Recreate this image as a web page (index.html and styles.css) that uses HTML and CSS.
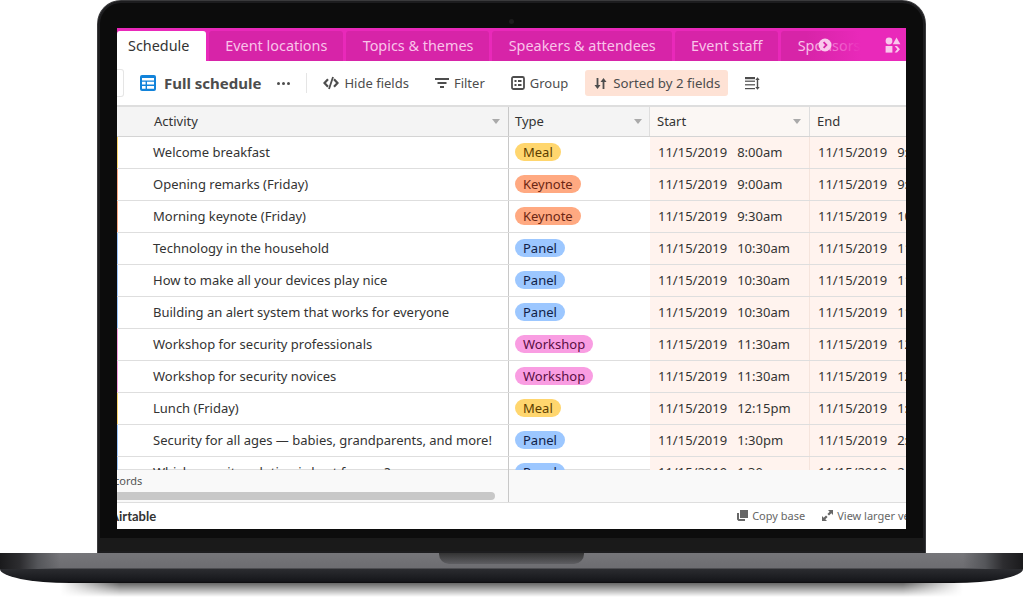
FILE: index.html
```html
<!DOCTYPE html>
<html lang="en">
  <head>
    <meta charset="UTF-8" />
    <meta name="viewport" content="width=device-width, initial-scale=1.0" />
    <title>Event schedule</title>
    <link rel="stylesheet" href="styles.css">
  </head>
  <body>
    <div class="laptop">
      <div class="lid">
        <span class="camera"></span>
        <div class="screen">
          <nav class="tabs">
            <a class="tab active">Schedule</a>
            <a class="tab">Event locations</a>
            <a class="tab">Topics &amp; themes</a>
            <a class="tab">Speakers &amp; attendees</a>
            <a class="tab">Event staff</a>
            <a class="tab">Sponsors</a>
            <span class="tabs-fade"></span>
            <svg class="tabs-next" width="14" height="14" viewBox="0 0 14 14">
              <circle cx="7" cy="7" r="6.5" fill="#f9c9ec" />
              <path d="M5.6 4.2 8.4 7l-2.8 2.8" fill="none" stroke="#d724a8" stroke-width="1.8" />
            </svg>
            <svg class="tabs-apps" width="16" height="16" viewBox="0 0 16 16" fill="#f9c9ec">
              <circle cx="4" cy="4" r="3.4" />
              <path d="M11.5 .6 15.4 7.2H7.8z" />
              <rect x=".6" y="9" width="6.8" height="6.6" />
              <path d="M9.6 9 12 9 15 12.300 12 15.600 9.600 15.600 12.300 12.300z" />
            </svg>
          </nav>

          <div class="toolbar">
            <span class="stub"></span>
            <svg class="grid-icon" width="16" height="16" viewBox="0 0 16 16">
              <rect width="16" height="16" rx="2" fill="#1283da" />
              <path d="M2 3h12v2.400H2zM2 6.800h3.600v2.800H2zM7 6.800h7v2.800H7zM2 11h3.600v2.800H2zM7 11h7v2.800H7z" fill="#fff" />
            </svg>
            <strong class="view-name">Full schedule</strong>
            <span class="dots"><i></i><i></i><i></i></span>
            <span class="divider"></span>
            <span class="tool hide">
              <svg width="16" height="14" viewBox="0 0 16 14" fill="none" stroke="#4d4d4d" stroke-width="2.200">
                <path d="M5 3.300 1.500 7 5 10.700M11 3.300 14.500 7 11 10.700" />
                <path d="M10 1 6 13" stroke-width="1.800" />
              </svg>
              Hide fields
            </span>
            <span class="tool filter">
              <svg width="14" height="12" viewBox="0 0 14 12" fill="#4d4d4d">
                <rect y="1" width="14" height="2" />
                <rect x="2.500" y="5" width="9" height="2" />
                <rect x="5" y="9" width="4" height="2" />
              </svg>
              Filter
            </span>
            <span class="tool group">
              <svg width="14" height="14" viewBox="0 0 14 14">
                <rect x="1" y="1" width="12" height="12" rx="1.500" fill="none" stroke="#4d4d4d" stroke-width="1.800" />
                <path d="M3.500 4h2v2h-2zM7 4h3.500v2H7zM3.500 8h2v2h-2zM7 8h3.500v2H7z" fill="#4d4d4d" />
              </svg>
              Group
            </span>
            <span class="tool sorted">
              <svg width="13" height="13" viewBox="0 0 13 13" fill="#4d4d4d">
                <path d="M2.600 1h1.800v7H6.500L3.500 12 .5 8h2.100zM8.600 12h1.800V5h2.100L9.500 1l-3 4h2.100z" />
              </svg>
              Sorted by 2 fields
            </span>
            <svg class="row-height" width="15" height="13" viewBox="0 0 15 13" fill="#4d4d4d">
              <rect width="10" height="2.200" />
              <rect y="3.600" width="10" height="1.200" />
              <rect y="7.200" width="10" height="1.200" />
              <rect y="11" width="10" height="1.200" />
              <path d="M12 .2 14.200 3h-1.500v7h1.500L12 12.800 9.800 10h1.500V3H9.800z" transform="translate(.5)" />
            </svg>
          </div>

          <div class="grid">
            <div class="row head">
              <div class="cell name">Activity<span class="caret"></span></div>
              <div class="cell kind">Type<span class="caret"></span></div>
              <div class="cell start">Start<span class="caret"></span></div>
              <div class="cell end">End</div>
            </div>
            <div class="rows">
              <div class="row is-meal">
                <div class="cell name">Welcome breakfast</div>
                <div class="cell kind"><span class="pill meal">Meal</span></div>
                <div class="cell start"><span>11/15/2019</span><span>8:00am</span></div>
                <div class="cell end"><span>11/15/2019</span><span>9:00am</span></div>
              </div>
              <div class="row is-keynote">
                <div class="cell name">Opening remarks (Friday)</div>
                <div class="cell kind"><span class="pill keynote">Keynote</span></div>
                <div class="cell start"><span>11/15/2019</span><span>9:00am</span></div>
                <div class="cell end"><span>11/15/2019</span><span>9:30am</span></div>
              </div>
              <div class="row is-keynote">
                <div class="cell name">Morning keynote (Friday)</div>
                <div class="cell kind"><span class="pill keynote">Keynote</span></div>
                <div class="cell start"><span>11/15/2019</span><span>9:30am</span></div>
                <div class="cell end"><span>11/15/2019</span><span>10:30am</span></div>
              </div>
              <div class="row is-panel">
                <div class="cell name">Technology in the household</div>
                <div class="cell kind"><span class="pill panel">Panel</span></div>
                <div class="cell start"><span>11/15/2019</span><span>10:30am</span></div>
                <div class="cell end"><span>11/15/2019</span><span>11:30am</span></div>
              </div>
              <div class="row is-panel">
                <div class="cell name">How to make all your devices play nice</div>
                <div class="cell kind"><span class="pill panel">Panel</span></div>
                <div class="cell start"><span>11/15/2019</span><span>10:30am</span></div>
                <div class="cell end"><span>11/15/2019</span><span>11:30am</span></div>
              </div>
              <div class="row is-panel">
                <div class="cell name">Building an alert system that works for everyone</div>
                <div class="cell kind"><span class="pill panel">Panel</span></div>
                <div class="cell start"><span>11/15/2019</span><span>10:30am</span></div>
                <div class="cell end"><span>11/15/2019</span><span>11:30am</span></div>
              </div>
              <div class="row is-workshop">
                <div class="cell name">Workshop for security professionals</div>
                <div class="cell kind"><span class="pill workshop">Workshop</span></div>
                <div class="cell start"><span>11/15/2019</span><span>11:30am</span></div>
                <div class="cell end"><span>11/15/2019</span><span>12:15pm</span></div>
              </div>
              <div class="row is-workshop">
                <div class="cell name">Workshop for security novices</div>
                <div class="cell kind"><span class="pill workshop">Workshop</span></div>
                <div class="cell start"><span>11/15/2019</span><span>11:30am</span></div>
                <div class="cell end"><span>11/15/2019</span><span>12:15pm</span></div>
              </div>
              <div class="row is-meal">
                <div class="cell name">Lunch (Friday)</div>
                <div class="cell kind"><span class="pill meal">Meal</span></div>
                <div class="cell start"><span>11/15/2019</span><span>12:15pm</span></div>
                <div class="cell end"><span>11/15/2019</span><span>1:30pm</span></div>
              </div>
              <div class="row is-panel">
                <div class="cell name">Security for all ages — babies, grandparents, and more!</div>
                <div class="cell kind"><span class="pill panel">Panel</span></div>
                <div class="cell start"><span>11/15/2019</span><span>1:30pm</span></div>
                <div class="cell end"><span>11/15/2019</span><span>2:30pm</span></div>
              </div>
              <div class="row is-panel">
                <div class="cell name">Which security solution is best for you?</div>
                <div class="cell kind"><span class="pill panel">Panel</span></div>
                <div class="cell start"><span>11/15/2019</span><span>1:30pm</span></div>
                <div class="cell end"><span>11/15/2019</span><span>2:30pm</span></div>
              </div>
            </div>
            <div class="summary">
              <div class="summary-left">
                <span class="count">24 records</span>
                <span class="scrollbar"></span>
              </div>
            </div>
          </div>

          <footer class="bottom">
            <span class="logo">Airtable</span>
            <span class="link copy">
              <svg width="11" height="11" viewBox="0 0 11 11" fill="#666">
                <path d="M3 0h8v8H3z" />
                <path d="M0 3h2v6h6v2H1.500L0 9.500z" />
              </svg>
              Copy base
            </span>
            <span class="link larger">
              <svg width="11" height="11" viewBox="0 0 11 11" fill="#666">
                <path d="M6 0h5v5L9.300 3.300 7 5.600 5.400 4 7.700 1.700zM5 11H0V6l1.700 1.700L4 5.400 5.600 7 3.300 9.300z" />
              </svg>
              View larger version
            </span>
          </footer>
        </div>
      </div>
      <div class="base">
        <span class="notch"></span>
      </div>
      <div class="base-shadow"></div>
    </div>
  </body>
</html>
```

FILE: styles.css
```css
* {
  box-sizing: border-box;
  margin: 0;
  padding: 0;
}

html,
body {
  height: 602px;
  overflow: hidden;
  background: white;
}

body {
  font-family: "Noto Sans", sans-serif;
  color: #333;
}

.lid {
  position: relative;
  width: 829px;
  height: 553px;
  margin-left: 97px;
  padding: 28px 20px 0;
  background: linear-gradient(to bottom, #0c0c0c 537px, #1a1a1a 537px);
  border: 1px solid #3a3a3c;
  border-bottom: 0;
  border-radius: 24px 24px 0 0;
  box-shadow: inset 0 0 0 2px #1d1d1f;
}

.camera {
  position: absolute;
  top: 18px;
  left: 411px;
  width: 5px;
  height: 5px;
  border-radius: 50%;
  background: #1c1c1c;
}

.screen {
  width: 789px;
  height: 501px;
  margin-left: -1px;
  margin-top: -1px;
  background: white;
  overflow: hidden;
}

.tabs {
  position: relative;
  display: flex;
  gap: 3px;
  height: 33px;
  padding-top: 3px;
  background: #e929ba;
}

.tab {
  flex: none;
  height: 30px;
  padding: 0 16px 0 16.300px;
  border-radius: 3px 3px 0 0;
  background: #d724a8;
  color: #f9c4ea;
  font-size: 14.400px;
  line-height: 30px;
}

.tab.active {
  width: 89px;
  padding: 0 11px;
  background: white;
  color: #333;
}

.tabs-fade {
  position: absolute;
  top: 0;
  right: 0;
  width: 100px;
  height: 33px;
  background: linear-gradient(to right, rgba(233, 41, 186, 0) 0%, #e929ba 55%);
}

.tabs-next {
  position: absolute;
  top: 10px;
  left: 701px;
}

.tabs-apps {
  position: absolute;
  top: 9px;
  left: 768px;
}

.toolbar {
  display: flex;
  align-items: center;
  height: 44px;
  background: white;
  color: #4d4d4d;
  font-size: 13px;
}

.stub {
  width: 7px;
  height: 28px;
  margin-right: 16px;
  border: 1px solid #e5e5e5;
  border-left: 0;
  border-radius: 0 3px 3px 0;
}

.view-name {
  margin-left: 8px;
  font-size: 15px;
}

.dots {
  display: flex;
  gap: 2px;
  margin-left: 16px;
}

.dots i {
  width: 3px;
  height: 3px;
  border-radius: 50%;
  background: #4d4d4d;
}

.divider {
  width: 1px;
  height: 20px;
  margin: 0 16px;
  background: #e5e5e5;
}

.tool {
  display: flex;
  align-items: center;
  gap: 5px;
}

.filter {
  margin-left: 26px;
}

.group {
  margin-left: 26px;
}

.sorted {
  gap: 6px;
  height: 26px;
  margin-left: 17px;
  padding: 0 8px 0 9px;
  border-radius: 3px;
  background: #fee2d5;
  font-size: 13.250px;
}

.row-height {
  margin-left: 17px;
}

.grid {
  border-top: 2px solid #dedede;
}

.row {
  display: grid;
  grid-template-columns: 392px 141px 160px 200px;
  height: 32px;
  border-bottom: 1px solid #dedede;
  font-size: 13px;
}

.rows {
  height: 333px;
  overflow: hidden;
}

.cell {
  position: relative;
  display: flex;
  align-items: center;
  padding-bottom: 2px;
  padding-left: 6px;
  border-right: 1px solid #e5e5e5;
  white-space: nowrap;
  overflow: hidden;
}

.cell.name {
  padding-left: 36px;
  border-right: 1px solid #c8c8c8;
}

.is-meal .name {
  box-shadow: inset 1px 0 0 #ffd66e;
}

.is-keynote .name {
  box-shadow: inset 1px 0 0 #ffa981;
}

.is-panel .name {
  box-shadow: inset 1px 0 0 #9cc7ff;
}

.is-workshop .name {
  box-shadow: inset 1px 0 0 #f99de2;
}

.cell.kind {
  border-right: 0;
}

.cell.start,
.cell.end {
  gap: 10px;
  padding-left: 8px;
  background: #fff3ee;
}

.cell.start {
  border-right: 1px solid #f5e4dc;
}

.row.head {
  height: 30px;
  border-bottom: 1px solid #d4d4d4;
}

.head .cell {
  background: #f4f4f4;
}

.head .cell.name {
  padding-left: 37px;
}

.head .cell.start,
.head .cell.end {
  background: #fbf7f4;
}

.head .cell.start {
  margin-left: -1px;
  border-left: 1px solid #dedede;
  border-right: 1px solid #dedede;
  padding-left: 7px;
}

.head .cell.end {
  padding-left: 7px;
}

.caret {
  position: absolute;
  top: 12px;
  right: 8px;
  border: 4px solid transparent;
  border-top: 5px solid #aaa;
  border-bottom: 0;
}

.pill {
  height: 18px;
  padding: 0 8px;
  border-radius: 9px;
  line-height: 18px;
}

.pill.meal {
  background: #ffd66e;
  color: #5c3d00;
}

.pill.keynote {
  background: #ffa981;
  color: #6b2613;
}

.pill.panel {
  background: #9cc7ff;
  color: #102046;
}

.pill.workshop {
  background: #f99de2;
  color: #5a0e42;
}

.summary {
  height: 34px;
  margin-top: -1px;
  border-top: 1px solid #dedede;
  border-bottom: 1px solid #dedede;
  background: #f9f9f9;
}

.summary-left {
  position: relative;
  width: 392px;
  height: 32px;
  border-right: 1px solid #c8c8c8;
}

.count {
  position: absolute;
  top: 2px;
  left: -29px;
  color: #555;
  font-size: 11px;
  line-height: 18px;
}

.scrollbar {
  position: absolute;
  top: 22px;
  left: 0;
  width: 378px;
  height: 8px;
  border-radius: 0 4px 4px 0;
  background: #c8c8c8;
}

.bottom {
  position: relative;
  display: flex;
  align-items: center;
  height: 26px;
  padding-bottom: 1px;
  color: #666;
  font-size: 11px;
  white-space: nowrap;
}

.logo {
  margin-left: -7px;
  color: #333;
  font-family: "Lato", sans-serif;
  font-size: 13px;
  font-weight: 700;
}

.link {
  display: flex;
  flex: none;
  align-items: center;
  gap: 4px;
}

.copy {
  margin-left: 581px;
}

.larger {
  margin-left: 17px;
}

.base {
  position: relative;
  width: 1023px;
  height: 30px;
  border-radius: 0 0 70px 70px / 0 0 14px 14px;
  background:
    linear-gradient(to right, #1a1a1c 0, #2d2d30 20px, #55565a 38px, transparent 60px),
    linear-gradient(to left, #1a1a1c 0, #2d2d30 20px, #55565a 38px, transparent 60px),
    linear-gradient(to bottom, #76767a 0, #6d6d71 15px, #2b2c30 16px, #16171b 28px, #0b0b0d 30px);
  background-size: 100% 16px, 100% 16px, 100% 100%;
  background-repeat: no-repeat;
}

.notch {
  position: absolute;
  top: 0;
  left: 439px;
  width: 145px;
  height: 11px;
  border-radius: 0 0 10px 10px;
  background: linear-gradient(to bottom, #333 0, #5e5e62 100%);
}

.base-shadow {
  width: 903px;
  height: 14px;
  margin-left: 60px;
  background: linear-gradient(to bottom, rgba(0, 0, 0, 0.6), rgba(0, 0, 0, 0));
  -webkit-mask-image: linear-gradient(to right, transparent, black 60px, black 843px, transparent);
  mask-image: linear-gradient(to right, transparent, black 60px, black 843px, transparent);
}
```
